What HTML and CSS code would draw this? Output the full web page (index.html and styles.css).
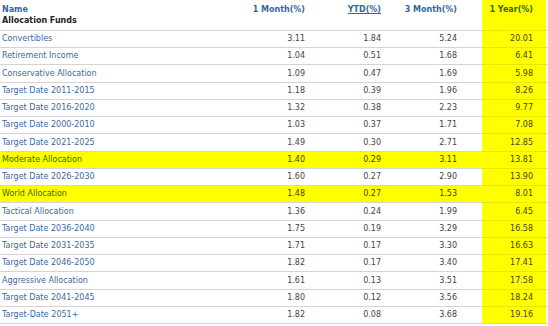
FILE: index.html
```html
<!DOCTYPE html>
<html lang="en">
<head>
  <meta charset="UTF-8">
  <title>Allocation Funds</title>
  <link rel="stylesheet" href="styles.css">
</head>
<body>
  <table class="funds">
    <colgroup>
      <col class="col-name">
      <col class="col-m1">
      <col class="col-ytd">
      <col class="col-m3">
      <col class="col-y1">
      <col class="col-end">
    </colgroup>
    <thead>
      <tr>
        <th class="name-head">
          <a href="#" class="head-link">Name</a>
          <div class="group">Allocation Funds</div>
        </th>
        <th><a href="#" class="head-link">1 Month(%)</a></th>
        <th><a href="#" class="head-link sorted">YTD(%)</a></th>
        <th class="m3"><a href="#" class="head-link">3 Month(%)</a></th>
        <th class="year"><a href="#" class="head-link">1 Year(%)</a></th>
        <th class="end"></th>
      </tr>
    </thead>
    <tbody>
      <tr><td><a href="#">Convertibles</a></td><td>3.11</td><td>1.84</td><td class="m3">5.24</td><td class="year">20.01</td><td class="end"></td></tr>
      <tr><td><a href="#">Retirement Income</a></td><td>1.04</td><td>0.51</td><td class="m3">1.68</td><td class="year">6.41</td><td class="end"></td></tr>
      <tr><td><a href="#">Conservative Allocation</a></td><td>1.09</td><td>0.47</td><td class="m3">1.69</td><td class="year">5.98</td><td class="end"></td></tr>
      <tr><td><a href="#">Target Date 2011-2015</a></td><td>1.18</td><td>0.39</td><td class="m3">1.96</td><td class="year">8.26</td><td class="end"></td></tr>
      <tr><td><a href="#">Target Date 2016-2020</a></td><td>1.32</td><td>0.38</td><td class="m3">2.23</td><td class="year">9.77</td><td class="end"></td></tr>
      <tr><td><a href="#">Target Date 2000-2010</a></td><td>1.03</td><td>0.37</td><td class="m3">1.71</td><td class="year">7.08</td><td class="end"></td></tr>
      <tr><td><a href="#">Target Date 2021-2025</a></td><td>1.49</td><td>0.30</td><td class="m3">2.71</td><td class="year">12.85</td><td class="end"></td></tr>
      <tr class="marked"><td><a href="#">Moderate Allocation</a></td><td>1.40</td><td>0.29</td><td class="m3">3.11</td><td class="year">13.81</td><td class="end"></td></tr>
      <tr><td><a href="#">Target Date 2026-2030</a></td><td>1.60</td><td>0.27</td><td class="m3">2.90</td><td class="year">13.90</td><td class="end"></td></tr>
      <tr class="marked"><td><a href="#">World Allocation</a></td><td>1.48</td><td>0.27</td><td class="m3">1.53</td><td class="year">8.01</td><td class="end"></td></tr>
      <tr><td><a href="#">Tactical Allocation</a></td><td>1.36</td><td>0.24</td><td class="m3">1.99</td><td class="year">6.45</td><td class="end"></td></tr>
      <tr><td><a href="#">Target Date 2036-2040</a></td><td>1.75</td><td>0.19</td><td class="m3">3.29</td><td class="year">16.58</td><td class="end"></td></tr>
      <tr><td><a href="#">Target Date 2031-2035</a></td><td>1.71</td><td>0.17</td><td class="m3">3.30</td><td class="year">16.63</td><td class="end"></td></tr>
      <tr><td><a href="#">Target Date 2046-2050</a></td><td>1.82</td><td>0.17</td><td class="m3">3.40</td><td class="year">17.41</td><td class="end"></td></tr>
      <tr><td><a href="#">Aggressive Allocation</a></td><td>1.61</td><td>0.13</td><td class="m3">3.51</td><td class="year">17.58</td><td class="end"></td></tr>
      <tr><td><a href="#">Target Date 2041-2045</a></td><td>1.80</td><td>0.12</td><td class="m3">3.56</td><td class="year">18.24</td><td class="end"></td></tr>
      <tr><td><a href="#">Target-Date 2051+</a></td><td>1.82</td><td>0.08</td><td class="m3">3.68</td><td class="year">19.16</td><td class="end"></td></tr>
    </tbody>
  </table>
</body>
</html>
```

FILE: styles.css
```css
* {
  box-sizing: border-box;
}

body {
  margin: 0;
  background: #fff;
  font-family: "DejaVu Sans", Verdana, sans-serif;
  font-size: 8px;
  color: #444;
}

a {
  color: #3a68a2;
  text-decoration: none;
}

.funds {
  width: 548px;
  border-collapse: collapse;
  table-layout: fixed;
}

.col-name { width: 230px; }
.col-m1 { width: 80px; }
.col-ytd { width: 76px; }
.col-m3 { width: 96px; }
.col-y1 { width: 64px; }
.col-end { width: 2px; }

th {
  height: 30px;
  padding: 4px 5px 3px 0;
  vertical-align: top;
  text-align: right;
  line-height: 11px;
  font-weight: bold;
  border-bottom: 1px solid #d4d4d4;
}

td {
  height: 17px;
  padding: 0 5px 0 0;
  text-align: right;
  vertical-align: middle;
  line-height: 11px;
  border-bottom: 1px solid #d4d4d4;
  white-space: nowrap;
}

/* every fourth row is a pixel taller, so the rows average 17.25px */
tbody tr:nth-child(4n+3) td {
  height: 18px;
}

th.name-head,
td:first-child {
  text-align: left;
  padding-left: 2px;
}

.head-link {
  color: #35679f;
}

.head-link.sorted {
  text-decoration: underline;
}

.group {
  color: #222;
}

.m3 {
  padding-right: 25px;
}

.year {
  padding-right: 13px;
  background: #ffff00;
  color: #444400;
  border-bottom-color: #e8e800;
}

.year .head-link {
  color: #356800;
}

.end {
  padding: 0;
}

/* rows picked out with the marker */
.marked td {
  background: #ffff00;
  color: #444400;
}

.marked td.end {
  background: #fff;
}

.marked a {
  color: #3a6800;
}
```
